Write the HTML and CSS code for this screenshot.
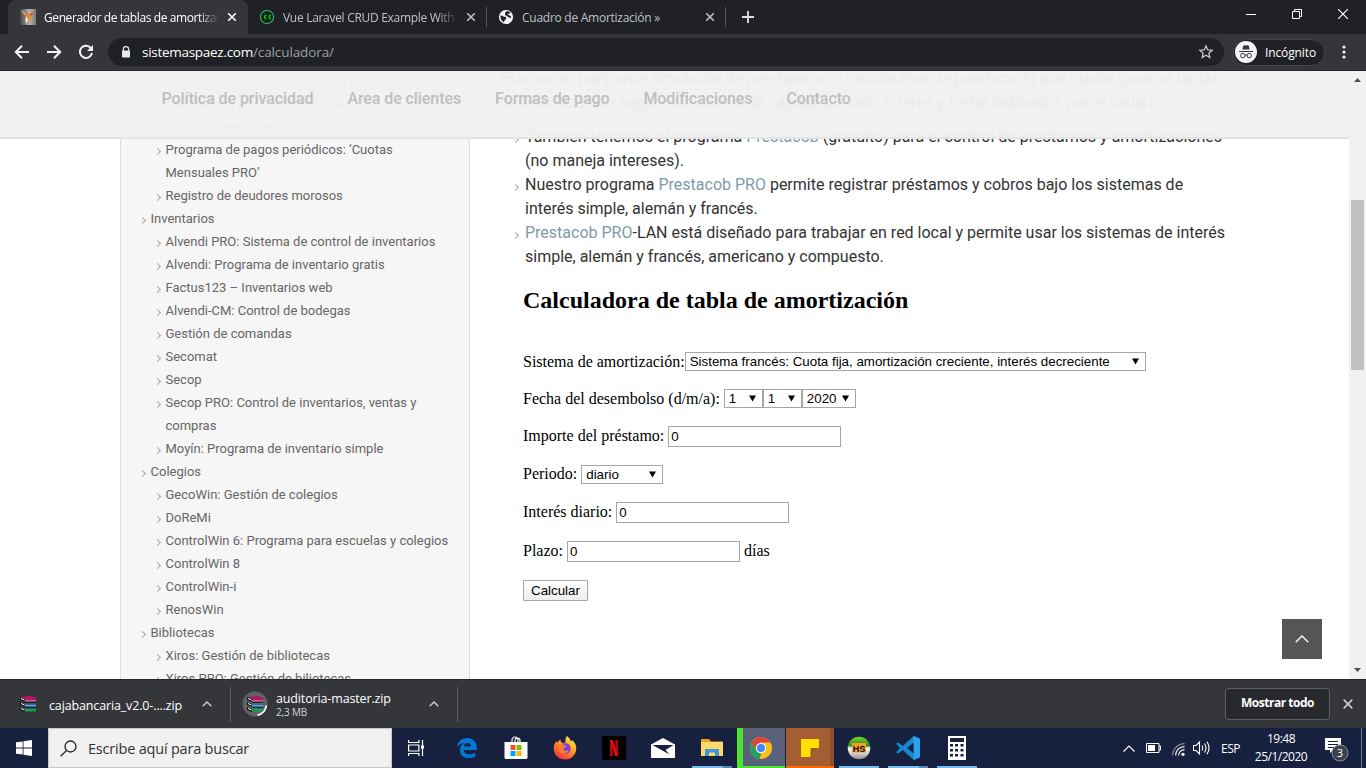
FILE: index.html
```html
<!DOCTYPE html>
<html lang="es">
<head>
<meta charset="utf-8">
<title>Generador de tablas de amortización</title>
<link rel="stylesheet" href="styles.css">
</head>
<body>
<header class="tabstrip">
  <div class="tab tab-active">
    <svg class="favicon" width="16" height="16" viewBox="0 0 16 16"><defs><linearGradient id="fv" x1="0" x2="1"><stop offset="0" stop-color="#444"/><stop offset=".6" stop-color="#b5b5b0"/><stop offset="1" stop-color="#77776f"/></linearGradient></defs><rect width="16" height="16" fill="url(#fv)"/><path d="M1 1.500l5 2 2.500 4-4-2z" fill="#e9c46a"/><path d="M3 2l4 2.500L8 8z" fill="#d9542c"/><path d="M7 7l3-2.500 4-1-2.500 3.500L9.500 11 7 14z" fill="#f08a24"/><path d="M9 5.500l5-2-3 3z" fill="#d62f1c"/><path d="M6 7l2 3.500L6.500 15 5.500 12z" fill="#f4f1e2"/></svg>
    <span class="tab-title t1">Generador de tablas de amortizac</span>
    <svg class="x" width="10" height="10" viewBox="0 0 10 10"><path d="M1.200 1.200l7.600 7.600M8.800 1.200L1.200 8.800" stroke="#fff" stroke-width="1.600"/></svg>
  </div>
  <div class="tab tab-second">
    <svg class="favicon" width="16" height="16" viewBox="0 0 16 16"><circle cx="8" cy="8" r="6.600" fill="#10241b" stroke="#2fa866" stroke-width="1.200"/><path d="M7.400 6.200A1.800 1.800 0 1 0 7.400 9.800M12 6.200A1.800 1.800 0 1 0 12 9.800" fill="none" stroke="#1fc000" stroke-width="1.400"/></svg>
    <span class="tab-title t2">Vue Laravel CRUD Example With T</span>
    <svg class="x" width="10" height="10" viewBox="0 0 10 10"><path d="M1.200 1.200l7.600 7.600M8.800 1.200L1.200 8.800" stroke="#c3c6ca" stroke-width="1.500"/></svg>
  </div>
  <div class="tab tab-third">
    <svg class="favicon" width="16" height="16" viewBox="0 0 16 16"><circle cx="8" cy="8" r="7.100" fill="#f1f3f4"/><path d="M2.500 6.500c2-.6 3 1.600 5 1.300 1 .1.600 1.900 0 2.600-1 1-1.300 2-2 2.800-2-1.400-3.300-3.700-3-6.700zM8 2.500c1.500-.8 3.500 0 4.600 1.400-1 .8-2.600.6-3 1.600 1.500.6 3.400 1 3.600 2.700-.8.9-2.400.6-3.200-.5C9 6.900 7.500 6.700 7 5.500 6.800 4.400 7.600 3.500 8 2.500z" fill="#202124"/></svg>
    <span class="tab-title t3">Cuadro de Amortización »</span>
    <svg class="x" width="10" height="10" viewBox="0 0 10 10"><path d="M1.200 1.200l7.600 7.600M8.800 1.200L1.200 8.800" stroke="#c3c6ca" stroke-width="1.500"/></svg>
  </div>
  <svg class="newtab" width="14" height="14" viewBox="0 0 14 14"><path d="M7 1v12M1 7h12" stroke="#dcdee0" stroke-width="1.800"/></svg>
  <div class="winctl">
    <svg width="10" height="10" viewBox="0 0 10 10"><path d="M0 5.500h10" stroke="#fff"/></svg>
    <svg width="10" height="10" viewBox="0 0 10 10"><path d="M.5 2.500h7v7h-7zM2.500 2.500v-2h7v7h-2" fill="none" stroke="#fff"/></svg>
    <svg width="10" height="10" viewBox="0 0 10 10"><path d="M0 0l10 10M10 0L0 10" stroke="#fff" stroke-width="1.200"/></svg>
  </div>
</header>
<div class="toolbar">
  <div class="navbtns">
    <svg width="16" height="16" viewBox="0 0 16 16"><path d="M15 8H2M8 1.800L1.800 8 8 14.200" fill="none" stroke="#f1f3f4" stroke-width="2"/></svg>
    <svg width="16" height="16" viewBox="0 0 16 16"><path d="M1 8h13M8 1.800L14.200 8 8 14.200" fill="none" stroke="#f1f3f4" stroke-width="2"/></svg>
    <svg width="16" height="16" viewBox="0 0 16 16"><path d="M13.200 4.600A6.100 6.100 0 1 0 14 9" fill="none" stroke="#f1f3f4" stroke-width="2"/><path d="M15 1v6H9z" fill="#f1f3f4"/></svg>
  </div>
  <div class="omnibox">
    <svg class="lock" width="10" height="12" viewBox="0 0 10 12"><path d="M2.300 5V3.300a2.700 2.700 0 0 1 5.400 0V5" fill="none" stroke="#e8eaed" stroke-width="1.200"/><rect x="1" y="4.500" width="8" height="7" rx=".8" fill="#e8eaed"/></svg>
    <span class="url"><b>sistemaspaez.com</b><i>/calculadora/</i></span>
    <svg class="star" width="16" height="16" viewBox="0 0 16 16"><path d="M8 1.900l1.800 4 4.300.4-3.200 2.900.9 4.300L8 11.300l-3.800 2.200.9-4.300-3.200-2.900 4.300-.4z" fill="none" stroke="#c3c5c8" stroke-width="1.300"/></svg>
  </div>
  <div class="incog">
    <svg width="22" height="22" viewBox="0 0 22 22"><circle cx="11" cy="11" r="11" fill="#f1f3f4"/><path d="M7.300 8.500l1-3.700c.2-.6.6-.7 1.200-.5.900.4 2.100.4 3 0 .6-.2 1-.1 1.200.5l1 3.700z" fill="#35363a"/><path d="M4 10.500h14" stroke="#35363a"/><circle cx="7.800" cy="14.600" r="2.200" fill="none" stroke="#35363a"/><circle cx="14.200" cy="14.600" r="2.200" fill="none" stroke="#35363a"/><path d="M10 14.300q1-.6 2 0" fill="none" stroke="#35363a"/></svg>
    <span>Incógnito</span>
  </div>
  <svg class="dots" width="4" height="14" viewBox="0 0 4 14"><g fill="#f1f3f4"><circle cx="2" cy="2" r="1.600"/><circle cx="2" cy="7" r="1.600"/><circle cx="2" cy="12" r="1.600"/></g></svg>
</div>

<div class="viewport">
  <div class="page">
    <aside class="sidebar">
      <ul class="side">
        <li class="sub">Prestacob PRO – LAN: Sistema de préstamos</li>
        <li class="sub">Calculadora de préstamos on-line</li>
        <li class="sub">Cuotas mensuales</li>
        <li class="sub">Programa de pagos periódicos: ‘Cuotas<br>Mensuales PRO’</li>
        <li class="sub">Registro de deudores morosos</li>
        <li>Inventarios</li>
        <li class="sub">Alvendi PRO: Sistema de control de inventarios</li>
        <li class="sub">Alvendi: Programa de inventario gratis</li>
        <li class="sub">Factus123 – Inventarios web</li>
        <li class="sub">Alvendi-CM: Control de bodegas</li>
        <li class="sub">Gestión de comandas</li>
        <li class="sub">Secomat</li>
        <li class="sub">Secop</li>
        <li class="sub">Secop PRO: Control de inventarios, ventas y<br>compras</li>
        <li class="sub">Moyín: Programa de inventario simple</li>
        <li>Colegios</li>
        <li class="sub">GecoWin: Gestión de colegios</li>
        <li class="sub">DoReMi</li>
        <li class="sub">ControlWin 6: Programa para escuelas y colegios</li>
        <li class="sub">ControlWin 8</li>
        <li class="sub">ControlWin-i</li>
        <li class="sub">RenosWin</li>
        <li>Bibliotecas</li>
        <li class="sub">Xiros: Gestión de bibliotecas</li>
        <li class="sub">Xiros PRO: Gestión de biliotecas</li>
      </ul>
    </aside>
    <main class="main">
      <p class="intro">Este es un programa simulador de préstamos (o calculadora de préstamos) que puede generar tablas<br>de amortización según los valores de capital, periodo, interés y fecha indicados por el usuario.</p>
      <ul class="notes">
        <li>También tenemos el programa <a>Prestacob</a> (gratuito) para el control de préstamos y amortizaciones<br>(no maneja intereses).</li>
        <li>Nuestro programa <a>Prestacob PRO</a> permite registrar préstamos y cobros bajo los sistemas de<br>interés simple, alemán y francés.</li>
        <li><a>Prestacob PRO</a>-LAN está diseñado para trabajar en red local y permite usar los sistemas de interés<br>simple, alemán y francés, americano y compuesto.</li>
      </ul>
      <form class="calc">
        <h2>Calculadora de tabla de amortización</h2>
        <div class="row r37"><label>Sistema de amortización:</label><span class="sel s-sys"><em>Sistema francés: Cuota fija, amortización creciente, interés decreciente</em><svg width="7" height="7" viewBox="0 0 7 7"><path d="M0 .5h7L3.500 6.500z"/></svg></span></div>
        <div class="row r37"><label>Fecha del desembolso (d/m/a):</label><span class="sel s-d gap"><em>1</em><svg width="7" height="7" viewBox="0 0 7 7"><path d="M0 .5h7L3.500 6.500z"/></svg></span><span class="sel s-d"><em>1</em><svg width="7" height="7" viewBox="0 0 7 7"><path d="M0 .5h7L3.500 6.500z"/></svg></span><span class="sel s-y"><em>2020</em><svg width="7" height="7" viewBox="0 0 7 7"><path d="M0 .5h7L3.500 6.500z"/></svg></span></div>
        <div class="row"><label>Importe del préstamo:</label><input class="gap" value="0"></div>
        <div class="row"><label>Periodo:</label><span class="sel s-p gap"><em>diario</em><svg width="7" height="7" viewBox="0 0 7 7"><path d="M0 .5h7L3.500 6.500z"/></svg></span></div>
        <div class="row"><label>Interés diario:</label><input class="gap" value="0"></div>
        <div class="row r40"><label>Plazo:</label><input class="gap" value="0"><label class="gap">días</label></div>
        <div class="row"><button type="button">Calcular</button></div>
      </form>
    </main>
  </div>
  <nav class="sitenav"><a>Política de privacidad</a><a>Area de clientes</a><a>Formas de pago</a><a>Modificaciones</a><a>Contacto</a></nav>
  <div class="totop"><svg width="14" height="8" viewBox="0 0 14 8"><path d="M.7 7.300L7 1l6.300 6.300" fill="none" stroke="#fff" stroke-width="1.300"/></svg></div>
  <div class="scroll">
    <svg width="7" height="4" viewBox="0 0 7 4"><path d="M0 4h7L3.500 0z" fill="#505050"/></svg>
    <div class="thumb"></div>
    <svg width="7" height="4" viewBox="0 0 7 4"><path d="M0 0h7L3.500 4z" fill="#505050"/></svg>
  </div>
</div>

<svg width="0" height="0" class="defs"><defs>
  <symbol id="rar" viewBox="0 0 16 16"><path d="M0 1L11 0l5 2v3.500H5L0 3.500z" fill="#b3155f"/><path d="M0 6l5 1.500h11v3H5L0 8.500z" fill="#1d6fc4"/><path d="M0 11l5 1.500h11v3H5L0 13.500z" fill="#149a5b"/><path d="M5 5h11M5 10h11" stroke="#e9e6dc" stroke-width=".8"/><path d="M5 6.200h11M5 11.200h11" stroke="#111"/><path d="M0 1l5 2v3L0 4zM0 6l5 2v3L0 9zM0 11l5 2v3l-5-2z" fill="#151515"/><path d="M1 2.500L4.500 4M1 7.500L4.500 9M1 12.500L4.500 14" stroke="#fff"/></symbol>
</defs></svg>
<div class="downloads">
  <div class="dl dl-a"><svg width="16" height="16"><use href="#rar"/></svg><span class="name">cajabancaria_v2.0-....zip</span><svg class="up" width="10" height="6" viewBox="0 0 10 6"><path d="M.7 5.300L5 1l4.300 4.300" fill="none" stroke="#c4c6c9" stroke-width="1.500"/></svg></div>
  <div class="dl dl-b"><svg width="26" height="26" viewBox="0 0 26 26"><circle cx="13" cy="13" r="12.500" fill="#5f6165"/><path d="M24.300 14.500A11.500 11.500 0 0 1 15.500 24.200" fill="none" stroke="#fff" stroke-width="1.800"/><use href="#rar" x="5" y="5" width="16" height="16"/></svg><div class="stack"><span class="name">auditoria-master.zip</span><span class="size">2,3 MB</span></div><svg class="up" width="10" height="6" viewBox="0 0 10 6"><path d="M.7 5.300L5 1l4.300 4.300" fill="none" stroke="#c4c6c9" stroke-width="1.500"/></svg></div>
  <div class="showall"><span>Mostrar todo</span></div>
  <svg class="dlx" width="10" height="10" viewBox="0 0 10 10"><path d="M.7.700l8.600 8.600M9.300.700L.7 9.300" stroke="#c8cacd" stroke-width="1.700"/></svg>
</div>

<footer class="taskbar">
  <div class="start"><svg width="16" height="16" viewBox="0 0 16 16" fill="#fff"><path d="M0 2.300L6.700 1.400v6.200H0zM7.500 1.300L16 0v7.600H7.500zM0 8.400h6.700v6.200L0 13.700zM7.500 8.400H16V16l-8.500-1.300z"/></svg></div>
  <div class="search"><svg width="17" height="17" viewBox="0 0 17 17"><circle cx="10.500" cy="6.500" r="5.500" fill="none" stroke="#222" stroke-width="1.300"/><path d="M6.600 10.400L.7 16.300" stroke="#222" stroke-width="1.300"/></svg><span>Escribe aquí para buscar</span></div>
  <div class="slot view"><svg width="16" height="16" viewBox="0 0 16 16" fill="none" stroke="#fff" stroke-width="1.200"><path d="M.6 0v2.500h10.300V0M.6 16v-2.500h10.300V16M.6 5h10.300v6H.6zM14.500 0v16"/><path d="M13 5.500h3v3h-3z" fill="#fff" stroke="none"/></svg></div>
  <div class="slot"><svg width="20" height="20" viewBox="0 0 20 20"><path d="M0 9.200C.7 3.500 4.800 0 10 0c6.300 0 9.800 4.500 9.800 9.600V12H6.600c.2 3 2.700 4.300 5.700 4.300 2.200 0 4.400-.6 6-1.600v4c-1.900.9-4.300 1.400-6.700 1.400-5.200 0-8.700-3-8.700-7.800 0-3.200 1.600-5.800 4.600-7.200C4.200 5.300 1.500 6.700 0 9.200zM6.800 8.400h7c0-2.200-1.200-3.500-3.200-3.500-2.100 0-3.600 1.400-3.800 3.500z" fill="#0078d7"/></svg></div>
  <div class="slot"><svg width="24" height="24" viewBox="0 0 24 24"><path d="M8 7V4a3 3 0 0 1 6 0v3M11 6V4a2.600 2.600 0 0 1 5 0v3" fill="none" stroke="#fff" stroke-width="1.200"/><path d="M.5 6h23v15.500a1.500 1.500 0 0 1-1.500 1.500H2A1.500 1.500 0 0 1 .5 21.500z" fill="#fff"/><path d="M6.500 9h5v5h-5z" fill="#f25022"/><path d="M12.500 9h5v5h-5z" fill="#7fba00"/><path d="M6.500 15h5v5h-5z" fill="#00a4ef"/><path d="M12.500 15h5v5h-5z" fill="#ffb900"/></svg></div>
  <div class="slot"><svg width="24" height="24" viewBox="0 0 24 24"><defs><linearGradient id="ff" x1=".8" y1="0" x2=".2" y2="1"><stop offset="0" stop-color="#fff04a"/><stop offset=".45" stop-color="#ff9a1f"/><stop offset="1" stop-color="#f0264f"/></linearGradient></defs><path d="M14 0c2 1.500 3.500 3.500 3.800 5.500.8-.3 1.200-.9 1.300-1.500 2.500 2 4.200 5 4.200 8.200C23.300 18.500 18.500 23.500 12 23.500S.7 18.600.7 12.500c0-3.500 1.400-6 3-7.500l.4 2C5 5.500 6.500 4 7.500 3.500c-.1 1.500.6 3 2 3.500l3-.5C12 4 12.500 1.500 14 0z" fill="url(#ff)"/><circle cx="12" cy="12.500" r="5.500" fill="#7a3ee0"/><path d="M5.500 8.500c2-1 4.500-.5 6 .7l2.500.8c-.5 1.500-3 1.200-3.500 2.800-.7 1.500.7 2.700 2.500 2 1.500-.6 2.500-.3 2.600.5-1.600 3-7 3.500-9.300.2-1.500-2-1.700-5-.8-7z" fill="#ff7a2a"/></svg></div>
  <div class="slot"><svg width="24" height="24" viewBox="0 0 24 24"><path d="M0 0h24v24H0z"/><path d="M8 4h2.800v16L8 20.300zM13.400 4h2.800v16.300l-2.800-.3z" fill="#b1060f"/><path d="M8 4h2.800l5.400 16.300-3-.3z" fill="#e50914"/></svg></div>
  <div class="slot"><svg width="24" height="20" viewBox="0 0 24 20"><path d="M0 6.500L12 0l12 6.500V20H0z" fill="#fff"/><path d="M1.500 7h21L14.500 12l4 4.500z" fill="#18203f"/></svg></div>
  <div class="slot run multi"><svg width="22" height="20" viewBox="0 0 22 20"><path d="M0 1h8l2 2.500h12V17H0z" fill="#e5a820"/><path d="M0 4h22v14H0z" fill="#ffd86b"/><path d="M4 18v-7h14v7h-4v-3.500H8V18z" fill="#3a96dd"/></svg></div>
  <div class="slot chrome"><svg width="22" height="22" viewBox="0 0 22 22"><circle cx="11" cy="11" r="11" fill="#fbc116"/><path d="M1.500 5.500A11 11 0 0 1 20.500 5.500H11L6.200 13.700z" fill="#db4437"/><path d="M1.500 5.500L6.200 13.800 11 16l-1 6A11 11 0 0 1 1.500 5.500z" fill="#1da362"/><path d="M15.800 13.700L11 22H9.800l2.500-7z" fill="#fbc116"/><circle cx="11" cy="11" r="5.200" fill="#f4f4f4"/><circle cx="11" cy="11" r="4" fill="#4285f4"/></svg></div>
  <div class="slot sticky"><svg width="18" height="18" viewBox="0 0 18 18"><path d="M0 0h18v9L9.500 18H0z" fill="#ffdf00"/><path d="M9.500 9H18l-8.500 9z" fill="#9a5b22"/></svg></div>
  <div class="slot run"><svg width="24" height="24" viewBox="0 0 24 24"><defs><linearGradient id="hs" y2="1" x2="0"><stop offset="0" stop-color="#7cd62b"/><stop offset=".4" stop-color="#2c8c14"/><stop offset=".5" stop-color="#f4f4f4"/><stop offset=".75" stop-color="#cfcfcf"/><stop offset="1" stop-color="#8c8c8c"/></linearGradient></defs><circle cx="12" cy="12" r="11.300" fill="url(#hs)"/><rect x="5" y="7" width="14" height="9.500" fill="#f3a02c"/><text x="12" y="15.600" text-anchor="middle" class="hs">HS</text></svg></div>
  <div class="slot run multi"><svg width="24" height="24" viewBox="0 0 24 24"><path d="M17.500 0L24 2.800v18.400L17.500 24 6.800 14l-4.600 3.500L0 16.300 4 12 0 7.700l2.200-1.200L6.800 10zM17.800 6.500L11 12l6.800 5.500z" fill="#1787cf" fill-rule="evenodd"/><path d="M17.500 0L24 2.800v18.400L17.800 24z" fill="#2aa3ee"/></svg></div>
  <div class="slot run"><svg width="18" height="24" viewBox="0 0 18 24"><path d="M0 0h18v24H0z" fill="#fff"/><path d="M2 2h14v4H2zM2 8h3v2.500H2zM7 8h3v2.500H7zM12.500 8h3v2.500h-3zM2 13h3v2.500H2zM7 13h3v2.500H7zM12.500 13h3v2.500h-3zM2 18h3v2.500H2zM7 18h3v2.500H7zM12.500 18h3v2.500h-3z" fill="#18203f"/></svg></div>
  <div class="tray">
    <svg class="tr-up" width="12" height="7" viewBox="0 0 12 7"><path d="M.5 6.500L6 1l5.500 5.500" fill="none" stroke="#fff" stroke-width="1.200"/></svg>
    <svg class="tr-bat" width="15" height="10" viewBox="0 0 15 10"><path d="M.5.500h12.500v9H.5zM13 3h1.500v4H13" fill="none" stroke="#fff"/><path d="M2 2h7v6H2z" fill="#fff"/></svg>
    <svg class="tr-wifi" width="13" height="13" viewBox="0 0 13 13"><g fill="none" stroke="#fff" stroke-width="1.100"><path d="M.6 12.500C.6 6 6 .6 12.500.600" opacity=".5"/><path d="M3.600 12.500c0-5 4-8.900 8.900-8.900"/><path d="M6.600 12.500c0-3.300 2.600-5.900 5.900-5.900"/></g><circle cx="11" cy="11.300" r="1.600" fill="#fff"/></svg>
    <svg class="tr-vol" width="17" height="14" viewBox="0 0 17 14"><path d="M.5 4.500h2.500l3.500-3.500v12L3 9.500H.5zM9 4.500q1.500 2.500 0 5M11.500 2.500q3 4.500 0 9M14 .8q4 6.200 0 12.400" fill="none" stroke="#fff" stroke-width="1.100"/></svg>
    <span class="esp">ESP</span>
    <div class="clock"><span>19:48</span><span class="date">25/1/2020</span></div>
    <svg class="tr-note" width="26" height="26" viewBox="0 0 26 26"><path d="M1 1h16v12H9l-3 3v-3H1z" fill="#fff"/><path d="M4 4.500h10M4 7.500h10M4 10.500h7" stroke="#18203f"/><circle cx="16" cy="16" r="8" fill="#3b3f4b" stroke="#8a8d94"/><text x="16" y="20" text-anchor="middle" class="badge">3</text></svg>
    <i class="peek"></i>
  </div>
</footer>
</body>
</html>
```
FILE: styles.css
```css
*{box-sizing:border-box}
body{margin:0;width:1366px;height:768px;overflow:hidden;display:flex;flex-direction:column;background:#fff;font-family:"Open Sans","Noto Sans",sans-serif;font-size:12px}
svg{display:block;flex:none}
ul{list-style:none;margin:0;padding:0}
span,label,a{white-space:nowrap}
.defs{position:absolute}
.tabstrip{height:34px;flex:none;background:#202124;display:flex;align-items:stretch;padding-left:8px}
.tab{display:flex;align-items:center;width:239px;padding-left:12px;color:#bdc1c6}
.tab-active{width:240px;background:#35363a;border-radius:8px 8px 0 0;color:#fff}
.tab-second,.tab-third{padding-left:11px;position:relative}
.tab-second::after,.tab-third::after{content:"";position:absolute;right:0;top:7px;width:1px;height:20px;background:#54565a}
.tab-title{width:175px;margin-left:8px;overflow:hidden;letter-spacing:-.26px;-webkit-mask-image:linear-gradient(90deg,#000 88%,transparent)}
.t1{letter-spacing:-.4px}
.t2{letter-spacing:-.3px}
.t3{-webkit-mask-image:none}
.x{margin-left:8px}
.newtab{margin:10px 0 0 15px}
.winctl{margin-left:auto;display:flex;gap:36px;padding:9px 18px 0 0}
.toolbar{height:37px;flex:none;background:#35363a;border-bottom:1px solid #26272a;display:flex;align-items:center}
.navbtns{display:flex;gap:16px;margin-left:14px}
.omnibox{width:1116px;height:28px;margin-left:14px;border-radius:14px;background:#202124;display:flex;align-items:center;padding-left:13px}
.url{margin-left:11px;font-size:13.500px;color:#fff}
.url b{font-weight:400;letter-spacing:-.28px}
.url i{font-style:normal;color:#9aa0a6;letter-spacing:-.1px}
.star{margin-left:auto;margin-right:10px}
.incog{margin-left:9px;width:92px;height:27px;border-radius:14px;background:#202124;border:1px solid #3f4145;display:flex;align-items:center;padding-left:1px;color:#fff;letter-spacing:-.12px}
.incog span{margin-left:8px}
.dots{margin-left:17px}
.viewport{position:relative;height:608px;flex:none;overflow:hidden;display:flex}
.page{width:1349px;height:608px;display:flex;overflow:hidden;padding-left:120px}
.sidebar{width:350px;height:608px;flex:none;background:#f6f6f6;border:solid #dcdcdc;border-width:0 1px;padding-left:20.500px}
.side{margin-top:-2px;font:13px/23px Roboto,sans-serif;color:#666}
.side li,.notes li{position:relative;padding-left:9px;white-space:nowrap}
.side .sub{padding-left:24px}
.side li::before,.notes li::before{content:"";position:absolute;left:-2px;top:11px;width:4px;height:4px;border:solid #aaa;border-width:1.500px 1.500px 0 0;transform:rotate(45deg)}
.side .sub::before{left:13px}
.main{margin:-4px 0 0 30px;font:400 16px/24px Roboto,sans-serif;color:#333}
.intro{margin:0 0 10px;white-space:nowrap}
.notes{margin-left:15px}
.notes li{padding-left:10px}
.notes li::before{left:-2px;top:12px}
.notes a{color:#7d9aaa}
.calc{padding:16px 0 0 23px;font:16px/20px "Liberation Serif",serif;color:#000}
.calc h2{margin:0;height:58px;font:700 24px/30px "Liberation Serif",serif}
.row{height:38px;display:flex;align-items:center}
.r37{height:37px}
.r40{height:40px}
.gap{margin-left:4px}
.sel{display:flex;align-items:center;justify-content:space-between;height:19px;border:1px solid #a6a6a6;padding:0 6px 0 4px;font:13.333px/17px "Liberation Sans",sans-serif}
.sel em{font-style:normal}
.s-sys{width:461px}
.s-d{width:39px}
.s-y{width:54px}
.s-p{width:82px}
input{width:173px;height:21px;border:1px solid #a6a6a6;padding:1px 2px;border-radius:0;outline:0;font:13.333px "Liberation Sans",sans-serif}
button{width:65px;height:21px;padding:0;border:1px solid #a6a6a6;border-radius:1px;background:linear-gradient(#fff,#eee);font:13.333px "Liberation Sans",sans-serif;color:#000}
.sitenav{position:absolute;left:0;top:0;width:1349px;height:68px;background:rgba(241,241,241,.97);border-bottom:2px solid #e4e4e4;display:flex;gap:34px;padding:16px 0 0 161.500px;font:500 16px/24px Roboto,sans-serif;letter-spacing:-.08px;color:#bfbfbf}
.totop{position:absolute;left:1282px;top:548px;width:40px;height:40px;background:#555;display:flex;align-items:center;justify-content:center}
.scroll{width:17px;background:#f1f1f1;display:flex;flex-direction:column;align-items:center;padding:7px 0}
.thumb{width:13px;height:170px;margin:118px 0 auto;background:#c1c1c1}
.downloads{height:49px;flex:none;background:#35363a;border-top:1px solid #26272a;display:flex;align-items:center;color:#fff}
.dl{display:flex;align-items:center;height:35px;border-right:1px solid #5b5d61}
.dl-a{width:231px;padding-left:20px}
.dl-b{width:227px;padding-left:11px}
.dl-a .name{margin:4px 0 0 13px}
.stack{display:flex;flex-direction:column;margin:1px 0 0 8px}
.name{font-size:12.500px;line-height:16px;letter-spacing:-.14px}
.size{font-size:10px;line-height:11px;letter-spacing:-.18px;color:#d0d2d5}
.up{margin-left:auto;margin-right:18px}
.showall{margin-left:auto;width:105px;height:32px;border:1px solid #5f6165;border-radius:4px;background:#28292c;font-weight:700;letter-spacing:-.48px;display:flex;align-items:center;justify-content:center;padding-bottom:3px}
.dlx{margin:0 13px}
.taskbar{height:40px;flex:none;background:#18203f;display:flex;color:#fff}
.start{width:48px;display:flex;align-items:center;justify-content:center}
.search{width:344px;background:#f1f1f1;border:1px solid #c9c9c9;display:flex;align-items:center;padding-left:11px;color:#333;font-size:14.500px;letter-spacing:-.2px}
.search span{margin-left:11px}
.slot{width:49px;display:flex;align-items:center;justify-content:center;position:relative;padding-left:1px}
.view{width:50px;padding:0 2px 0 0}
.run::after{content:"";position:absolute;left:5px;bottom:0;width:40px;height:2px;background:#76b9ed}
.multi::after{background:linear-gradient(90deg,#76b9ed 31px,#5688b4 31px)}
.chrome{background:linear-gradient(90deg,#18203f 1px,#4be52f 1px,#4be52f 7px,#5a627b 7px)}
.chrome::after,.sticky::after{content:"";position:absolute;left:1px;right:0;bottom:0;height:2px;background:#4be52f}
.sticky{background:linear-gradient(90deg,#18203f 1px,#a55e32 1px,#a55e32 45px,#8f5029 45px)}
.sticky::after{background:#ff6a00}
.hs{font:700 9px "Liberation Sans",sans-serif;fill:#111}
.tray{margin-left:auto;display:flex;align-items:center}
.tr-up{margin-right:11px}
.tr-bat{margin-right:11px}
.tr-wifi{margin-right:8px;margin-top:2px}
.tr-vol{margin-right:11px}
.esp{width:20px;letter-spacing:-.5px}
.clock{width:54px;margin-left:13px;display:flex;flex-direction:column;align-items:center;line-height:18px;letter-spacing:-.5px}
.tr-note{margin:4px 0 0 16px}
.badge{font:11px "Open Sans",sans-serif;fill:#fff}
.peek{width:1px;height:40px;background:#6d7389;margin:0 4px 0 11px}
```
